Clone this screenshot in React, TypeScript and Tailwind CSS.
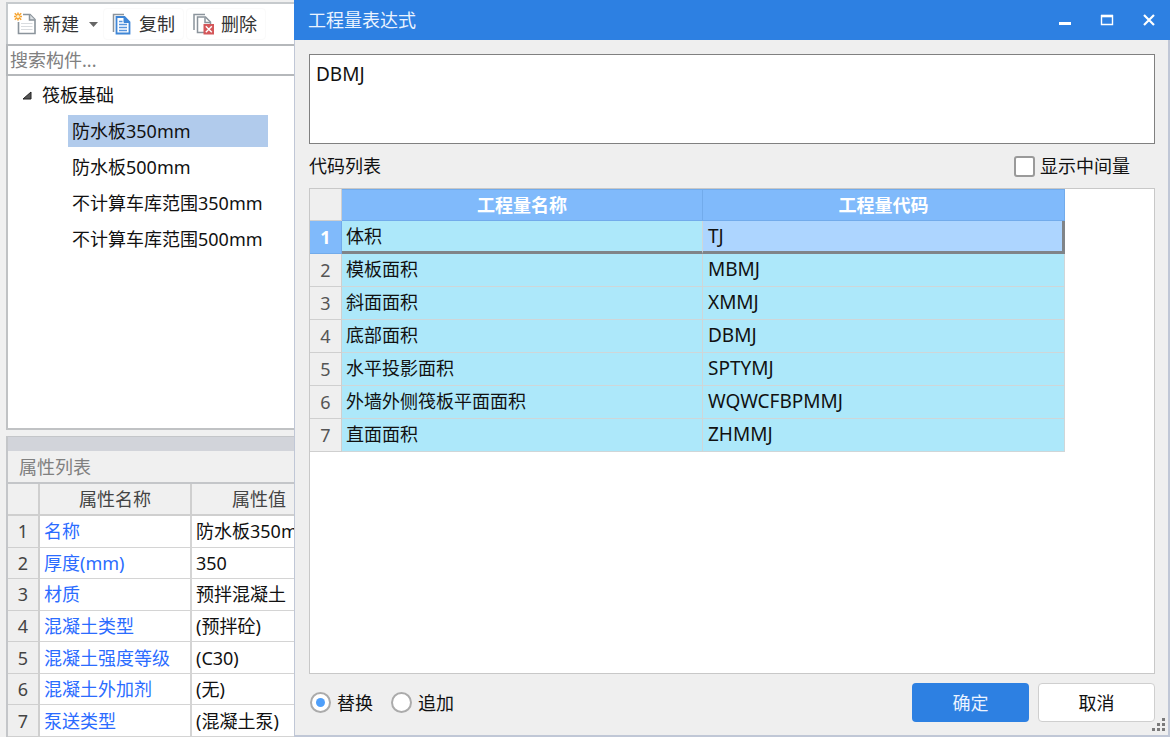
import React, { useState } from 'react';

interface Quantity {
  name: string;
  code: string;
}

interface Property {
  name: string;
  value: string;
}

const components = ['防水板350mm', '防水板500mm', '不计算车库范围350mm', '不计算车库范围500mm'];

const properties: Property[] = [
  { name: '名称', value: '防水板350mm' },
  { name: '厚度(mm)', value: '350' },
  { name: '材质', value: '预拌混凝土' },
  { name: '混凝土类型', value: '(预拌砼)' },
  { name: '混凝土强度等级', value: '(C30)' },
  { name: '混凝土外加剂', value: '(无)' },
  { name: '泵送类型', value: '(混凝土泵)' },
];

const quantities: Quantity[] = [
  { name: '体积', code: 'TJ' },
  { name: '模板面积', code: 'MBMJ' },
  { name: '斜面面积', code: 'XMMJ' },
  { name: '底部面积', code: 'DBMJ' },
  { name: '水平投影面积', code: 'SPTYMJ' },
  { name: '外墙外侧筏板平面面积', code: 'WQWCFBPMMJ' },
  { name: '直面面积', code: 'ZHMMJ' },
];

function NewIcon() {
  return (
    <svg width="24" height="24" viewBox="0 0 24 24" fill="none">
      <path d="M9 2.5H16L21 7.5V21.5H4.5V10" fill="#fff" stroke="#8b949c" strokeWidth="1.6" />
      <path d="M15.5 2.5V8H21" fill="#dde1e5" stroke="#8b949c" strokeWidth="1.5" />
      <path d="M7 11.5H18.5M7 14.5H18.5M7 17.5H18.5" stroke="#d9dcdf" />
      <path d="M4 .5V8.5M0 4.5H8M.8 1.3L7.2 7.7M7.2 1.3L.8 7.7" stroke="#f7a535" strokeWidth="1.6" />
      <circle cx="4" cy="4.5" r="1.6" fill="#fff3d0" />
    </svg>
  );
}

function CopyIcon() {
  return (
    <svg width="20" height="22" viewBox="0 0 20 22" fill="none">
      <path d="M1.5 19V1.5H12" stroke="#8b949c" strokeWidth="1.5" />
      <path d="M4.5 4H12.5L17.5 9V20.5H4.5Z" fill="#fff" stroke="#3f86d6" strokeWidth="1.8" />
      <path d="M12 4V9.5H17.5Z" fill="#3f86d6" stroke="#3f86d6" />
      <path d="M7 8.5H10.5M7 11.5H15M7 14.5H15M7 17.5H15" stroke="#5795dd" strokeWidth="1.3" />
    </svg>
  );
}

function DeleteIcon() {
  return (
    <svg width="22" height="22" viewBox="0 0 22 22" fill="none">
      <path d="M1 17V1.5H12" stroke="#8b949c" strokeWidth="1.5" />
      <path d="M11 19.5H4.5V4H12.5L17.5 9V11" fill="#fff" stroke="#8b949c" strokeWidth="1.5" />
      <path d="M12 4.5V9.5H17.5" stroke="#8b949c" strokeWidth="1.5" />
      <rect x="10.5" y="11" width="10.5" height="10.5" fill="#d4575a" />
      <path d="M12.8 13.3L18.8 19.3M18.8 13.3L12.8 19.3" stroke="#fff" strokeWidth="1.4" />
    </svg>
  );
}

function SidePanel() {
  const [selected, setSelected] = useState(0);

  return (
    <aside className="w-[294px] shrink-0 overflow-hidden pl-[6px] pt-[2px] flex flex-col">
      {/* Toolbar */}
      <div className="h-[42px] shrink-0 bg-white border-l-2 border-t-2 border-[#c6cacd] flex items-center text-[#333]">
        <button className="h-8 pl-[6px] flex items-center gap-[5px]">
          <NewIcon />
          新建
          <svg width="9" height="5" viewBox="0 0 9 5" className="ml-[5px]">
            <path d="M0 0H9L4.5 5Z" fill="#666" />
          </svg>
        </button>
        <button className="h-8 ml-[5px] px-2 rounded border border-[#fafafa] flex items-center gap-[7px]">
          <CopyIcon />
          复制
        </button>
        <button className="h-8 ml-[2px] pl-[6px] pr-2 rounded border border-[#fafafa] flex items-center gap-[6px]">
          <DeleteIcon />
          删除
        </button>
      </div>

      <input
        type="text"
        aria-label="搜索构件"
        placeholder="搜索构件..."
        className="h-[32px] shrink-0 w-full bg-white border-y-2 border-l-2 border-[#b5b8bb] pl-[2px] text-[#333] placeholder:text-[#808080] outline-none"
      />

      {/* Component tree */}
      <div className="flex-1 min-h-0 bg-white border-l-2 border-b-2 border-[#c0c2c4] pt-[3px] text-[#111]">
        <div className="h-8 pl-[14px] flex items-center gap-[10px]">
          <svg width="10" height="9" viewBox="0 0 10 9">
            <path d="M9 1V8H1Z" fill="#555" stroke="#222" />
          </svg>
          筏板基础
        </div>
        <ul className="mt-1 ml-[60px] mr-[26px] flex flex-col gap-1">
          {components.map((item, i) => (
            <li key={item}>
              <button
                onClick={() => setSelected(i)}
                className={`w-full h-8 pl-1 text-left whitespace-nowrap ${i === selected ? 'bg-[#b1cbec]' : ''}`}
              >
                {item}
              </button>
            </li>
          ))}
        </ul>
      </div>

      {/* Property list */}
      <div className="mt-[6px] shrink-0 border-l-2 border-[#c4c6c9]">
        <div className="h-[15px] bg-[#d2d4da] border-t border-[#c4c6c9]" />
        <h2 className="h-[33px] pl-[11px] flex items-center text-[#808080] border-b-2 border-[#c4c6c9]">属性列表</h2>
        <table className="w-[318px] h-[253px] table-fixed border-separate border-spacing-0 whitespace-nowrap">
          <colgroup>
            <col className="w-8" />
            <col className="w-[152px]" />
            <col />
          </colgroup>
          <thead>
            <tr className="h-8 text-[#444]">
              <th className="p-0 border-r-2 border-b-2 border-[#cfcfcf]"></th>
              <th className="p-0 font-normal border-r-2 border-b-2 border-[#cfcfcf]">属性名称</th>
              <th className="p-0 font-normal border-b-2 border-[#cfcfcf]">属性值</th>
            </tr>
          </thead>
          <tbody>
            {properties.map((p, i) => (
              <tr key={p.name} className="h-[31px] bg-white">
                <td className="p-0 text-center text-[#444] bg-[#efefef] border-r-2 border-b border-[#cfcfcf]">{i + 1}</td>
                <td className="p-0 pl-1 text-[#2b6cff] border-r-2 border-b border-[#d4d4d4]">{p.name}</td>
                <td className="p-0 pl-1 text-[#111] border-b border-[#d4d4d4]">{p.value}</td>
              </tr>
            ))}
          </tbody>
        </table>
      </div>
    </aside>
  );
}

function CodeTable() {
  const [active, setActive] = useState(0);

  return (
    <table className="w-[755px] table-fixed border-separate border-spacing-0">
      <colgroup>
        <col className="w-8" />
        <col className="w-[361px]" />
        <col />
      </colgroup>
      <thead>
        <tr className="h-8 text-white">
          <th className="p-0 bg-[#efefef] border-r border-b border-[#cfcfcf]"></th>
          <th className="p-0 font-bold bg-[#80bafb] border border-l-0 border-[#72abeb]">工程量名称</th>
          <th className="p-0 font-bold bg-[#80bafb] border border-l-0 border-[#72abeb]">工程量代码</th>
        </tr>
      </thead>
      <tbody>
        {quantities.map((q, i) => {
          const current = i === active;
          return (
            <tr key={q.code} className="h-[33px] bg-[#ade8fa]" onClick={() => setActive(i)}>
              <td
                className={`p-0 text-center border-r border-b ${
                  current ? 'bg-[#80bafb] border-[#72abeb] text-white font-bold' : 'bg-[#efefef] border-[#cfcfcf] text-[#555]'
                }`}
              >
                {i + 1}
              </td>
              <td
                className={`p-0 pl-1 border-r border-r-[#cfd6d8] ${
                  current ? 'border-b-3 border-b-[#808488]' : 'pb-[2px] border-b border-b-[#cfd6d8]'
                }`}
              >
                {q.name}
              </td>
              <td
                className={`p-0 pl-[5px] text-[19px] leading-[24px] ${
                  current ? 'bg-[#add5ff] border-b-3 border-r-3 border-[#808488]' : 'pb-[2px] border-b border-r border-[#cfd6d8]'
                }`}
              >
                {q.code}
              </td>
            </tr>
          );
        })}
      </tbody>
    </table>
  );
}

const radioClass =
  "appearance-none size-[21px] rounded-full border-2 border-[#ababab] bg-white grid place-items-center checked:before:content-[''] checked:before:size-[9px] checked:before:rounded-full checked:before:bg-[#4f9ffa]";

function ExpressionDialog() {
  const [expression, setExpression] = useState('DBMJ');
  const [mode, setMode] = useState('replace');

  return (
    <section role="dialog" aria-label="工程量表达式" className="flex-1 min-w-0 flex flex-col bg-[#efefef]">
      <header className="h-10 shrink-0 bg-[#2d80e2] text-[#eaf3ff] flex items-center justify-between px-[14px]">
        <h1>工程量表达式</h1>
        <div className="flex items-center gap-[28px]">
          <button aria-label="最小化" className="size-[14px]">
            <svg width="14" height="14" viewBox="0 0 14 14">
              <path d="M1 10.5H13" stroke="#fff" strokeWidth="3" />
            </svg>
          </button>
          <button aria-label="最大化" className="size-[14px]">
            <svg width="14" height="14" viewBox="0 0 14 14" fill="none">
              <path d="M1.5 2V11.5H12.5V2" stroke="#fff" strokeWidth="1.4" />
              <path d="M1 3H13" stroke="#fff" strokeWidth="2.6" />
            </svg>
          </button>
          <button aria-label="关闭" className="size-[14px]">
            <svg width="14" height="14" viewBox="0 0 14 14">
              <path d="M2 2L12 12M12 2L2 12" stroke="#fff" strokeWidth="2.2" />
            </svg>
          </button>
        </div>
      </header>

      <div className="relative flex-1 min-h-0 flex flex-col border-l border-r-2 border-b-2 border-[#c0c7d6] pl-[14px] pr-[13px] pt-[14px] pb-[13px] text-[#111]">
        <textarea
          aria-label="表达式"
          value={expression}
          onChange={(e) => setExpression(e.target.value)}
          className="block w-full h-[90px] shrink-0 resize-none bg-white border border-[#808080] text-[19px] leading-[24px] px-[6px] py-[7px] outline-none"
        />

        <div className="h-[44px] shrink-0 flex items-center justify-between pr-[25px]">
          <span>代码列表</span>
          <label className="flex items-center gap-[5px]">
            <input
              type="checkbox"
              className="appearance-none size-[21px] rounded-[3px] border-2 border-[#9a9a9a] bg-white checked:bg-[#4f9ffa]"
            />
            显示中间量
          </label>
        </div>

        <div className="flex-1 min-h-0 overflow-hidden bg-white border border-[#c8c8c8]">
          <CodeTable />
        </div>

        <footer className="mt-[9px] shrink-0 flex items-center justify-between">
          <div className="pl-px flex items-center gap-[18px]">
            <label className="flex items-center gap-[6px]">
              <input type="radio" name="mode" className={radioClass} checked={mode === 'replace'} onChange={() => setMode('replace')} />
              替换
            </label>
            <label className="flex items-center gap-[6px]">
              <input type="radio" name="mode" className={radioClass} checked={mode === 'append'} onChange={() => setMode('append')} />
              追加
            </label>
          </div>
          <div className="flex gap-[9px]">
            <button className="w-[117px] h-[39px] rounded bg-[#2d80e2] text-[#eaf3ff]">确定</button>
            <button className="w-[117px] h-[39px] rounded border border-[#cfcfcf] bg-white">取消</button>
          </div>
        </footer>

        {/* Resize grip */}
        <svg width="13" height="13" viewBox="0 0 13 13" className="absolute right-[3px] bottom-[4px]" fill="#7a7a7a">
          <path d="M10 0h3v3h-3zM5 5h3v3h-3zM10 5h3v3h-3zM0 10h3v3h-3zM5 10h3v3h-3zM10 10h3v3h-3z" />
        </svg>
      </div>
    </section>
  );
}

export default function App() {
  return (
    <main className="h-screen overflow-hidden flex bg-[#f0f0f0] text-[18px] leading-[24px] font-['Noto_Sans','Noto_Sans_CJK_SC',sans-serif]">
      <SidePanel />
      <ExpressionDialog />
    </main>
  );
}
